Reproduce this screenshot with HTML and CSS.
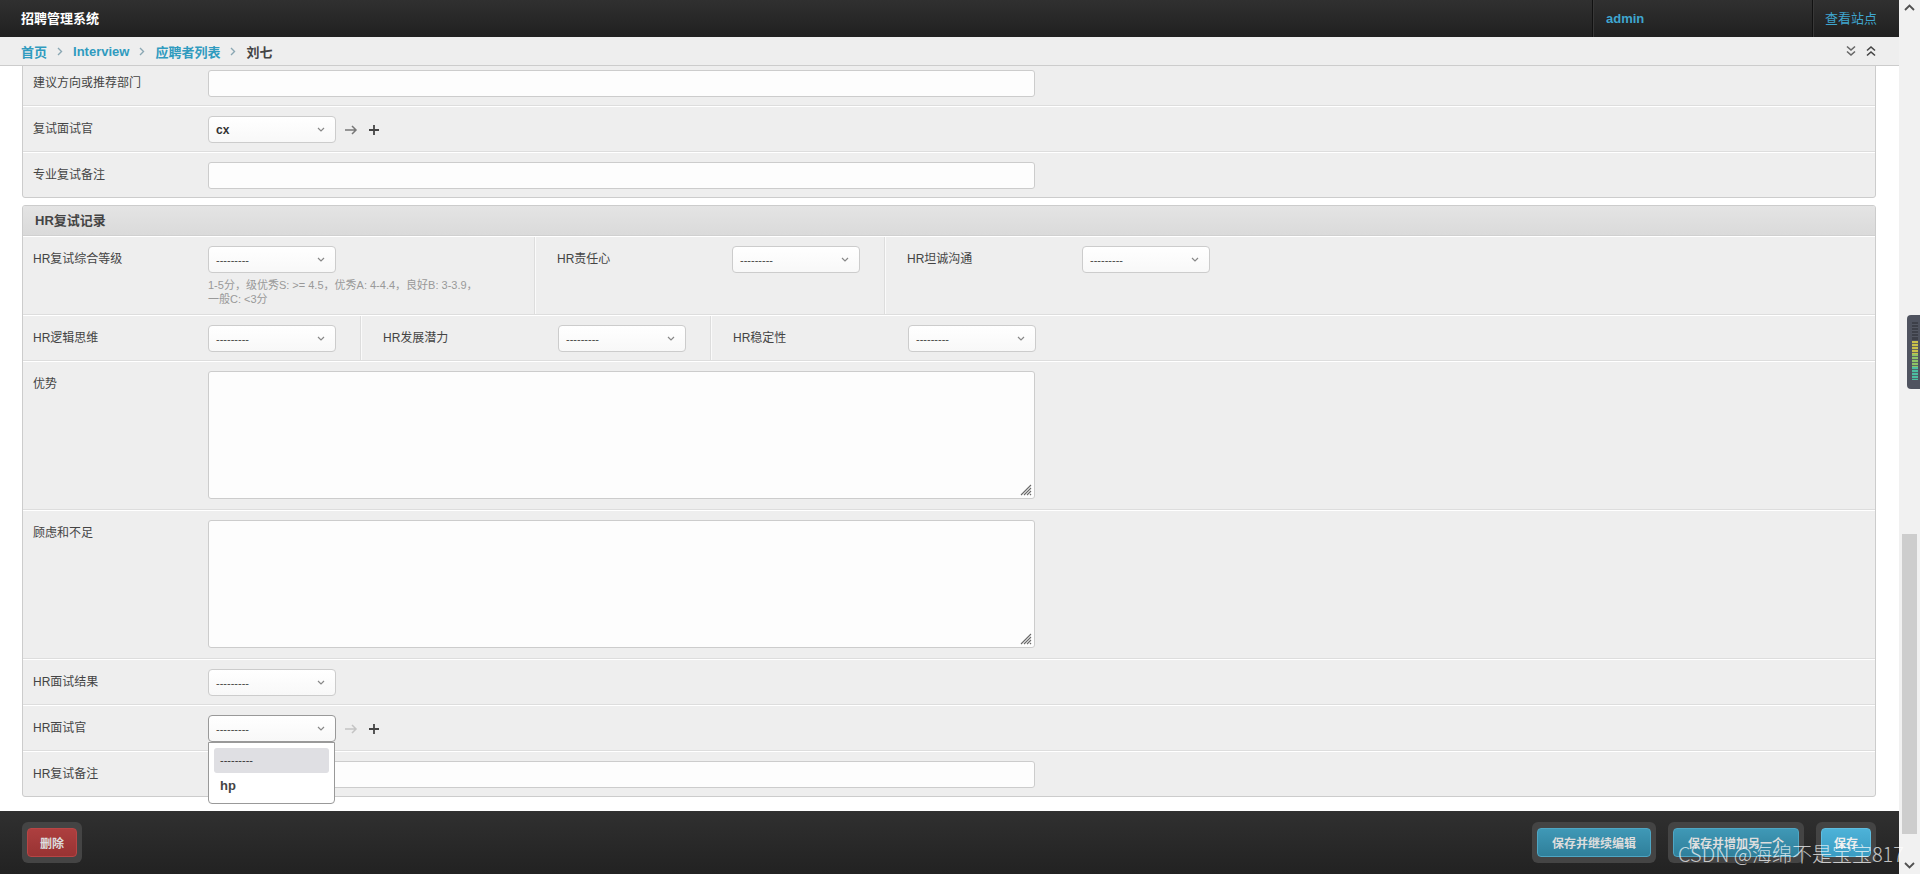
FILE: index.html
```html
<!DOCTYPE html>
<html lang="zh-CN">
<head>
    <meta charset="UTF-8">
    <meta name="viewport" content="width=device-width, initial-scale=1.0">
    <title>刘七 | 招聘管理系统</title>
    <link rel="stylesheet" href="styles.css">
</head>
<body>
<div class="page">
    <div class="main">
        <div class="header">
            <div class="brand">招聘管理系统</div>
            <ul class="user-tools">
                <li class="user">admin</li>
                <li class="site">查看站点</li>
            </ul>
        </div>

        <div class="breadcrumbs">
            <div class="crumbs">
                <a href="#">首页</a>
                <svg class="sep" viewBox="0 0 6 9"><path d="M1 1l3.5 3.5L1 8"/></svg>
                <a href="#">Interview</a>
                <svg class="sep" viewBox="0 0 6 9"><path d="M1 1l3.5 3.5L1 8"/></svg>
                <a href="#">应聘者列表</a>
                <svg class="sep" viewBox="0 0 6 9"><path d="M1 1l3.5 3.5L1 8"/></svg>
                <span class="current">刘七</span>
            </div>
            <div class="collapse-tools">
                <svg class="open-all" viewBox="0 0 12 12"><path d="M2 1.5l4 3.5 4-3.5M2 6.5l4 3.5 4-3.5"/></svg>
                <svg class="close-all" viewBox="0 0 12 12"><path d="M2 5.5l4-3.5 4 3.5M2 10.5l4-3.5 4 3.5"/></svg>
            </div>
        </div>

        <div class="content">
            <div class="module">
                <div class="row">
                    <div class="label">建议方向或推荐部门</div>
                    <div class="input"></div>
                </div>
                <div class="row">
                    <div class="label">复试面试官</div>
                    <div class="select"><span class="value">cx</span><svg class="caret" viewBox="0 0 8 5"><path d="M1 1l3 3 3-3"/></svg></div>
                    <svg class="related arrow" viewBox="0 0 14 10"><path d="M1 5h11M8 1l4 4-4 4"/></svg>
                    <svg class="related plus" viewBox="0 0 12 12"><path d="M6 1v10M1 6h10"/></svg>
                </div>
                <div class="row">
                    <div class="label">专业复试备注</div>
                    <div class="input"></div>
                </div>
            </div>

            <div class="module">
                <h2>HR复试记录</h2>
                <div class="row cells">
                    <div class="cell">
                        <div class="label">HR复试综合等级</div>
                        <div class="field">
                            <div class="select"><span>---------</span><svg class="caret" viewBox="0 0 8 5"><path d="M1 1l3 3 3-3"/></svg></div>
                            <p class="help">1-5分，级优秀S: &gt;= 4.5，优秀A: 4-4.4，良好B: 3-3.9，一般C: &lt;3分</p>
                        </div>
                    </div>
                    <div class="cell">
                        <div class="label">HR责任心</div>
                        <div class="select"><span>---------</span><svg class="caret" viewBox="0 0 8 5"><path d="M1 1l3 3 3-3"/></svg></div>
                    </div>
                    <div class="cell">
                        <div class="label">HR坦诚沟通</div>
                        <div class="select"><span>---------</span><svg class="caret" viewBox="0 0 8 5"><path d="M1 1l3 3 3-3"/></svg></div>
                    </div>
                </div>
                <div class="row cells">
                    <div class="cell">
                        <div class="label">HR逻辑思维</div>
                        <div class="select"><span>---------</span><svg class="caret" viewBox="0 0 8 5"><path d="M1 1l3 3 3-3"/></svg></div>
                    </div>
                    <div class="cell">
                        <div class="label">HR发展潜力</div>
                        <div class="select"><span>---------</span><svg class="caret" viewBox="0 0 8 5"><path d="M1 1l3 3 3-3"/></svg></div>
                    </div>
                    <div class="cell">
                        <div class="label">HR稳定性</div>
                        <div class="select"><span>---------</span><svg class="caret" viewBox="0 0 8 5"><path d="M1 1l3 3 3-3"/></svg></div>
                    </div>
                </div>
                <div class="row">
                    <div class="label">优势</div>
                    <div class="textarea">
                        <textarea></textarea>
                        <svg class="grip" viewBox="0 0 12 12"><path d="M11 1L1 11M11 4L4 11M11 7L7 11M11 10L10 11"/></svg>
                    </div>
                </div>
                <div class="row">
                    <div class="label">顾虑和不足</div>
                    <div class="textarea">
                        <textarea></textarea>
                        <svg class="grip" viewBox="0 0 12 12"><path d="M11 1L1 11M11 4L4 11M11 7L7 11M11 10L10 11"/></svg>
                    </div>
                </div>
                <div class="row">
                    <div class="label">HR面试结果</div>
                    <div class="select"><span>---------</span><svg class="caret" viewBox="0 0 8 5"><path d="M1 1l3 3 3-3"/></svg></div>
                </div>
                <div class="row">
                    <div class="label">HR面试官</div>
                    <div class="select open"><span>---------</span><svg class="caret" viewBox="0 0 8 5"><path d="M1 1l3 3 3-3"/></svg>
                        <ul class="dropdown">
                            <li class="selected">---------</li>
                            <li class="option">hp</li>
                        </ul>
                    </div>
                    <svg class="related arrow disabled" viewBox="0 0 14 10"><path d="M1 5h11M8 1l4 4-4 4"/></svg>
                    <svg class="related plus" viewBox="0 0 12 12"><path d="M6 1v10M1 6h10"/></svg>
                </div>
                <div class="row">
                    <div class="label">HR复试备注</div>
                    <div class="input"></div>
                </div>
            </div>
        </div>

        <div class="submit-row">
            <ul>
                <li><button class="btn delete">删除</button></li>
            </ul>
            <ul>
                <li><button class="btn">保存并继续编辑</button></li>
                <li><button class="btn">保存并增加另一个</button></li>
                <li><button class="btn default">保存</button></li>
            </ul>
        </div>
    </div>

    <div class="scrollbar">
        <svg class="scroll-btn" viewBox="0 0 21 17"><path d="M6 10l4.5-4.5L15 10"/></svg>
        <div class="track"><div class="thumb"></div></div>
        <svg class="scroll-btn" viewBox="0 0 21 17"><path d="M6 6l4.5 4.5L15 6"/></svg>
    </div>

    <svg class="meter" viewBox="0 0 13 74">
        <rect x="0" y="0" width="16" height="74" rx="4" fill="#4f535f"/>
        <rect x="5" y="7" width="6" height="18" fill="#3d4049"/>
        <path d="M5 9.5h6M5 12.5h6M5 15.5h6M5 18.5h6M5 21.5h6" stroke="#5a5e69" stroke-width="0.8"/>
        <rect x="5" y="26" width="6" height="13" fill="#c9c24a"/>
        <rect x="5" y="39" width="6" height="13" fill="#8fc466"/>
        <rect x="5" y="52" width="6" height="13" fill="#4cbfa0"/>
        <path d="M5 28.5h6M5 31.5h6M5 34.5h6M5 37.5h6M5 41.5h6M5 44.5h6M5 47.5h6M5 50.5h6M5 54.5h6M5 57.5h6M5 60.5h6M5 63.5h6" stroke="#4f535f" stroke-width="0.8"/>
    </svg>

    <div class="watermark">CSDN @海绵不是宝宝817</div>
</div>
</body>
</html>
```

FILE: styles.css
```css
* {
    box-sizing: border-box;
}
html, body {
    margin: 0;
    height: 100%;
}
body {
    font-family: "Liberation Sans", Arial, "Noto Sans CJK SC", sans-serif;
    font-size: 12px;
    color: #444;
    background: #fff;
    overflow: hidden;
}
.page {
    display: flex;
    height: 874px;
    position: relative;
}
.main {
    flex: 1;
    min-width: 0;
    display: flex;
    flex-direction: column;
}

/* header */
.header {
    height: 37px;
    flex-shrink: 0;
    display: flex;
    justify-content: space-between;
    background: linear-gradient(#303030, #202020);
}
.brand {
    padding-left: 21px;
    line-height: 37px;
    color: #fff;
    font-size: 13px;
    font-weight: bold;
}
.user-tools {
    display: flex;
    list-style: none;
    margin: 0;
    padding: 0;
}
.user-tools li {
    line-height: 37px;
    font-size: 13px;
    color: #3fa6cf;
    border-left: 1px solid #111;
    box-shadow: inset 1px 0 #383838;
}
.user-tools .user {
    width: 220px;
    padding-left: 13px;
    font-weight: bold;
}
.user-tools .site {
    width: 87px;
    padding-left: 12px;
}

/* breadcrumbs */
.breadcrumbs {
    height: 29px;
    flex-shrink: 0;
    display: flex;
    align-items: center;
    justify-content: space-between;
    padding: 0 22px 0 21px;
    background: #eee;
    border-bottom: 1px solid #ccc;
    font-size: 13px;
    font-weight: bold;
}
.crumbs {
    display: flex;
    align-items: center;
}
.crumbs a {
    color: #309bbf;
    text-decoration: none;
}
.crumbs .current {
    color: #444;
}
.sep {
    width: 6px;
    height: 9px;
    margin: 0 10px 0 10px;
    fill: none;
    stroke: #8aa7b3;
    stroke-width: 1.4;
}
.collapse-tools {
    display: flex;
    gap: 8px;
}
.collapse-tools svg {
    width: 12px;
    height: 12px;
    fill: none;
    stroke-width: 1.6;
}
.open-all {
    stroke: #666;
}
.close-all {
    stroke: #444;
}

/* form area */
.content {
    flex: 1;
    min-height: 0;
    overflow: hidden;
    display: flex;
    flex-direction: column;
    justify-content: flex-end;
    padding: 0 23px 14px 22px;
}
.module {
    flex-shrink: 0;
    background: #eee;
    border: 1px solid #ccc;
    border-radius: 3px;
}
.module + .module {
    margin-top: 7px;
}
.module h2 {
    margin: 0;
    height: 30px;
    line-height: 29px;
    padding-left: 12px;
    font-size: 13px;
    font-weight: bold;
    color: #444;
    background: linear-gradient(#e4e4e4, #dadada);
    border-bottom: 1px solid #d0d0d0;
    border-radius: 2px 2px 0 0;
}
.row {
    display: flex;
    align-items: flex-start;
    padding: 9px 10px 8px;
    border-top: 1px solid #fff;
    border-bottom: 1px solid #ddd;
}
.row:last-child {
    border-bottom: 0;
}
.row.cells {
    padding: 0;
    align-items: stretch;
}
.cell {
    display: flex;
    align-items: flex-start;
    padding: 9px 24px 8px 22px;
    border-left: 1px solid #ddd;
    box-shadow: inset 1px 0 #fafafa;
}
.cell:first-child {
    padding-left: 10px;
    border-left: 0;
    box-shadow: none;
}
.label {
    width: 175px;
    flex-shrink: 0;
    line-height: 27px;
    font-size: 12px;
    color: #444;
}
.field {
    width: 302px;
}
.help {
    width: 280px;
    margin: 5px 0 0;
    font-size: 11px;
    line-height: 14px;
    color: #999;
}

.input {
    width: 827px;
    height: 27px;
    background: #fdfdfd;
    border: 1px solid #ccc;
    border-radius: 3px;
}
.textarea {
    position: relative;
    margin-bottom: 2px;
}
textarea {
    display: block;
    width: 827px;
    height: 128px;
    margin: 0;
    background: #fdfdfd;
    border: 1px solid #ccc;
    border-radius: 3px;
    resize: none;
}
.grip {
    position: absolute;
    right: 3px;
    bottom: 3px;
    width: 12px;
    height: 12px;
    fill: none;
    stroke: #6a6a6a;
    stroke-width: 1.1;
}

.select {
    position: relative;
    width: 128px;
    height: 27px;
    flex-shrink: 0;
    display: flex;
    align-items: center;
    justify-content: space-between;
    padding: 0 10px 0 7px;
    background: linear-gradient(#fff, #f8f8f8);
    border: 1px solid #ccc;
    border-radius: 4px;
    font-size: 11px;
    color: #444;
}
.select .value {
    font-size: 12px;
    font-weight: bold;
    color: #333;
}
.caret {
    width: 8px;
    height: 5px;
    fill: none;
    stroke: #888;
    stroke-width: 1.2;
}
.select.open {
    border-color: #999;
}
.dropdown {
    position: absolute;
    top: 26px;
    left: -1px;
    z-index: 2;
    width: 127px;
    list-style: none;
    margin: 0;
    padding: 5px;
    background: #fff;
    border: 1px solid #999;
    border-radius: 0 0 4px 4px;
}
.dropdown li {
    height: 25px;
    line-height: 25px;
    padding-left: 6px;
    border-radius: 3px;
}
.dropdown .selected {
    background: #dfdfe3;
    font-size: 11px;
    color: #333;
}
.dropdown .option {
    font-size: 13px;
    font-weight: bold;
    color: #444;
}

.related {
    flex-shrink: 0;
    align-self: center;
    fill: none;
}
.arrow {
    width: 14px;
    height: 10px;
    margin-left: 8px;
    stroke: #777;
    stroke-width: 1.5;
}
.arrow.disabled {
    stroke: #c4c4c4;
}
.plus {
    width: 12px;
    height: 12px;
    margin-left: 10px;
    stroke: #444;
    stroke-width: 1.8;
}

/* footer */
.submit-row {
    height: 63px;
    flex-shrink: 0;
    display: flex;
    align-items: center;
    justify-content: space-between;
    padding: 0 23px 0 22px;
    background: linear-gradient(#303030, #222);
}
.submit-row ul {
    display: flex;
    gap: 12px;
    list-style: none;
    margin: 0;
    padding: 0;
}
.submit-row li {
    padding: 6px 5px;
    background: #444;
    border-radius: 6px;
}
.btn {
    display: block;
    height: 29px;
    padding: 0 14px;
    font-family: "Liberation Sans", Arial, "Noto Sans CJK SC", sans-serif;
    font-size: 12px;
    font-weight: bold;
    color: #ddd;
    border: 1px solid #4ea6c4;
    border-radius: 4px;
    background: linear-gradient(#3f98b6, #2f7f9a);
}
.btn.default {
    padding: 0 12px;
    border-color: #5ebde0;
    background: linear-gradient(#4db2d8, #3a9cc2);
    color: #eee;
}
.btn.delete {
    padding: 0 12px;
    border-color: #b84545;
    background: linear-gradient(#ad3f3f, #983333);
}

/* browser chrome */
.scrollbar {
    width: 21px;
    flex-shrink: 0;
    display: flex;
    flex-direction: column;
    background: #f1f1f1;
}
.scroll-btn {
    width: 21px;
    height: 17px;
    flex-shrink: 0;
    fill: none;
    stroke: #505050;
    stroke-width: 1.8;
}
.track {
    flex: 1;
    display: flex;
    flex-direction: column;
    justify-content: flex-end;
    padding: 0 3px 23px;
}
.thumb {
    height: 300px;
    background: #cdcdcd;
}
.meter {
    position: absolute;
    left: 1907px;
    top: 315px;
    width: 13px;
    height: 74px;
}
.watermark {
    position: absolute;
    right: 16px;
    bottom: 6px;
    font-family: "Noto Sans CJK SC", sans-serif;
    font-size: 20px;
    font-weight: 300;
    color: rgba(255, 255, 255, 0.72);
    white-space: nowrap;
}
```
